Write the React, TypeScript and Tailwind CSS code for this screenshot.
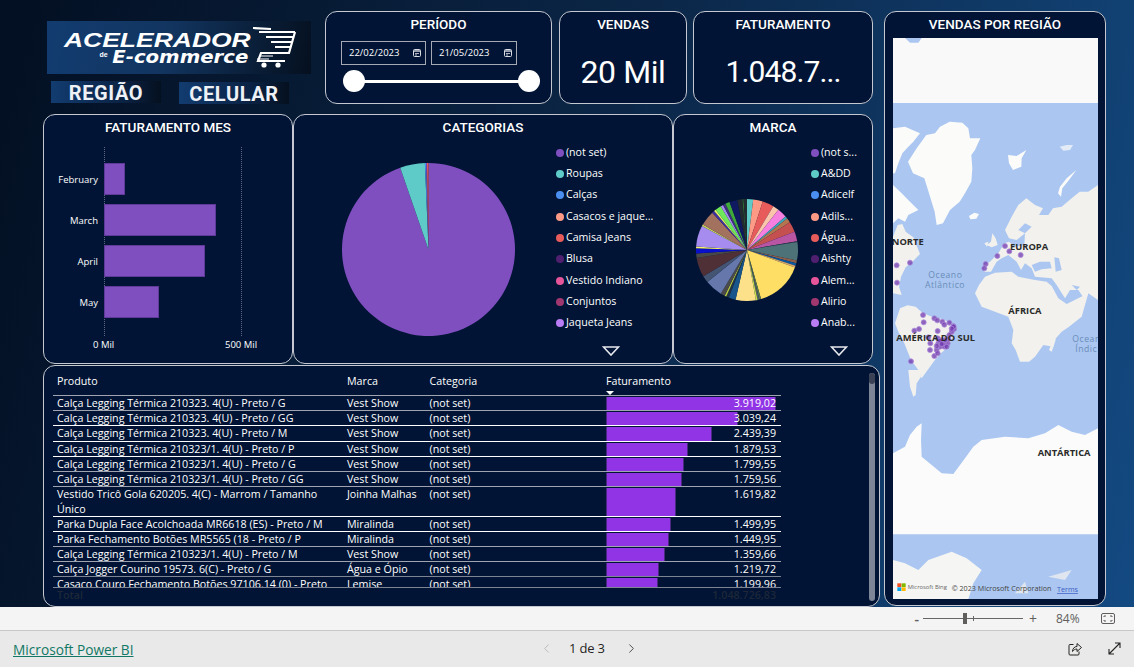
import { ChevronLeft, ChevronRight } from "lucide-react";

const BODY = "font-['Open_Sans','Noto_Sans',sans-serif]";
const TITLE = "font-['Roboto',sans-serif]";

const MONTHS = [
  { label: "February", width: 21 },
  { label: "March", width: 112 },
  { label: "April", width: 101 },
  { label: "May", width: 55 },
];

const CATEGORIAS = [
  { name: "(not set)", color: "#7f4fc0" },
  { name: "Roupas", color: "#5ecbc8" },
  { name: "Calças", color: "#4a8ff0" },
  { name: "Casacos e jaque...", color: "#fd9a85" },
  { name: "Camisa Jeans", color: "#e85b5b" },
  { name: "Blusa", color: "#4f1f70" },
  { name: "Vestido Indiano", color: "#e6559a" },
  { name: "Conjuntos", color: "#a0386f" },
  { name: "Jaqueta Jeans", color: "#b87cf5" },
];

const MARCAS = ["(not s...", "A&DD", "Adicelf", "Adils...", "Água...", "Aishty", "Alem...", "Alirio", "Anab..."];

// end angle of every slice, going clockwise from 12 o'clock
const CATEGORIA_SLICES: [number, string][] = [
  [340.9, "#7f4fc0"],
  [357.6, "#5ecbc8"],
  [358.4, "#4a8ff0"],
  [359, "#7f4fc0"],
  [360, "#e85b5b"],
];

const MARCA_SLICES: [number, string][] = [
  [7, "#5ecbc8"], [18, "#fd9a85"], [31, "#e85b5b"], [38, "#fbc5ac"], [49, "#f67fe0"], [52, "#3fa5b5"],
  [57, "#b5764f"], [69, "#c55050"], [80, "#b956a4"], [81, "#333c44"], [102, "#4d7378"], [105, "#8d5f4a"],
  [108, "#0d5aa0"], [110, "#d9a86f"], [164, "#fede65"], [166, "#5b7a4a"], [168, "#555f6a"], [170, "#c8e04a"],
  [193, "#fde08a"], [201, "#17558a"], [204, "#223344"], [206, "#b7c93f"], [211, "#4a4a4a"], [231, "#6678ab"],
  [239, "#445473"], [261, "#4f3037"], [266, "#484848"], [272, "#0a10c9"], [274, "#f7f26a"], [298, "#a58cee"],
  [300, "#c9d65a"], [317, "#a3725f"], [320, "#3f2f9f"], [322, "#e8f56a"], [329, "#6ee85a"], [332, "#a58cee"],
  [335, "#3f2f7f"], [340, "#3fa83a"], [349, "#0f1a60"], [355, "#222b2f"], [356, "#3a8a30"], [360, "#222b2f"],
];

const ROWS = [
  { produto: "Calça Legging Térmica 210323. 4(U) - Preto / G", marca: "Vest Show", valor: 3919.02, text: "3.919,02", h: "h-[15px] border-[#9ea4b0]" },
  { produto: "Calça Legging Térmica 210323. 4(U) - Preto / GG", marca: "Vest Show", valor: 3039.24, text: "3.039,24", h: "h-[15px] border-white" },
  { produto: "Calça Legging Térmica 210323. 4(U) - Preto / M", marca: "Vest Show", valor: 2439.39, text: "2.439,39", h: "h-[16px] border-white" },
  { produto: "Calça Legging Térmica 210323/1. 4(U) - Preto / P", marca: "Vest Show", valor: 1879.53, text: "1.879,53", h: "h-[15px] border-white" },
  { produto: "Calça Legging Térmica 210323/1. 4(U) - Preto / G", marca: "Vest Show", valor: 1799.55, text: "1.799,55", h: "h-[15px] border-[#9ea4b0]" },
  { produto: "Calça Legging Térmica 210323/1. 4(U) - Preto / GG", marca: "Vest Show", valor: 1759.56, text: "1.759,56", h: "h-[15px] border-[#9ea4b0]" },
  { produto: "Vestido Tricô Gola 620205. 4(C) - Marrom / Tamanho Único", marca: "Joinha Malhas", valor: 1619.82, text: "1.619,82", h: "h-[30px] border-white" },
  { produto: "Parka Dupla Face Acolchoada MR6618 (ES) - Preto / M", marca: "Miralinda", valor: 1499.95, text: "1.499,95", h: "h-[15px] border-white" },
  { produto: "Parka Fechamento Botões MR5565 (18 - Preto / P", marca: "Miralinda", valor: 1449.95, text: "1.449,95", h: "h-[15px] border-[#9ea4b0]" },
  { produto: "Calça Legging Térmica 210323/1. 4(U) - Preto / M", marca: "Vest Show", valor: 1359.66, text: "1.359,66", h: "h-[15px] border-[#9ea4b0]" },
  { produto: "Calça Jogger Courino 19573. 6(C) - Preto / G", marca: "Água e Ópio", valor: 1219.72, text: "1.219,72", h: "h-[15px] border-[#7d8494]" },
  { produto: "Casaco Couro Fechamento Botões 97106.14 (0) - Preto / M", marca: "Lemise", valor: 1199.96, text: "1.199,96", h: "h-[15px] border-[#7d8494]" },
];

const DOTS = [
  [35, 406], [75, 398], [36, 458], [302, 402], [298, 415], [337, 378], [360, 348], [373, 364], [407, 375],
  [114, 555], [116, 577], [148, 565], [157, 571], [172, 575], [178, 584], [193, 578], [205, 588], [207, 597],
  [200, 606], [193, 615], [158, 603], [88, 602], [102, 597], [130, 622], [158, 625], [136, 640], [135, 660],
  [155, 660], [148, 678], [158, 670], [165, 650], [178, 650], [188, 640], [170, 630], [185, 650], [78, 694],
  [160, 640], [175, 640], [190, 628], [165, 632], [180, 630], [170, 642], [155, 648], [206, 590], [200, 596],
];

function polar(cx: number, cy: number, r: number, deg: number) {
  const a = ((deg - 90) * Math.PI) / 180;
  return `${cx + r * Math.cos(a)} ${cy + r * Math.sin(a)}`;
}

function Pie({ slices, r }: { slices: [number, string][]; r: number }) {
  const c = r + 1;
  let start = 0;
  return (
    <svg width={c * 2} height={c * 2} viewBox={`0 0 ${c * 2} ${c * 2}`}>
      {slices.map(([end, color]) => {
        const large = end - start > 180 ? 1 : 0;
        const d = `M${c} ${c} L${polar(c, c, r, start)} A${r} ${r} 0 ${large} 1 ${polar(c, c, r, end)} Z`;
        start = end;
        return <path key={end} d={d} fill={color} />;
      })}
    </svg>
  );
}

function Panel({ title, className, children }: { title?: string; className: string; children: React.ReactNode }) {
  return (
    <div className={`relative rounded-[12px] border border-[#c5c8d0] bg-[#011435] text-white ${className}`}>
      {title && <div className={`${TITLE} pt-[3px] text-center text-[13.5px] font-medium leading-[18px]`}>{title}</div>}
      {children}
    </div>
  );
}

function Legend({ items, className }: { items: { name: string; color: string }[]; className: string }) {
  return (
    <div className={`absolute top-[27px] flex flex-col ${className}`}>
      {items.map((item) => (
        <div key={item.name} className={`${BODY} flex h-[21.35px] items-center gap-[2px] whitespace-nowrap text-[10.6px]`}>
          <span className="h-[8px] w-[8px] rounded-full" style={{ backgroundColor: item.color }} />
          {item.name}
        </div>
      ))}
    </div>
  );
}

function MoreArrow({ className }: { className: string }) {
  return (
    <svg className={`absolute top-[231px] ${className}`} width="18" height="10" viewBox="0 0 18 10">
      <path d="M1.5 1 H16.5 L9 9 Z" fill="#011435" stroke="#e8e8ee" strokeWidth="1.6" />
    </svg>
  );
}

function DateBox({ value }: { value: string }) {
  return (
    <div className={`${BODY} flex h-[24px] items-center justify-between border border-[#a5a9b3] pl-[7px] pr-[4px] text-[9.5px] text-white`}>
      {value}
      <svg width="8" height="8" viewBox="0 0 8 8" fill="none" stroke="#d9dbe2">
        <rect x="0.5" y="0.5" width="7" height="7" rx="1" />
        <path d="M1 2 H7" strokeWidth="1.4" />
        <path d="M2 4.5 H6 M2 6 H4" strokeWidth="0.8" />
      </svg>
    </div>
  );
}

function Logo() {
  return (
    <div className="flex h-[53px] w-[264px] items-center overflow-hidden bg-[linear-gradient(100deg,#123c70_0%,#123560_45%,#05101f_100%)]">
      <div className="ml-[17px] flex w-[184px] flex-col">
        <span className="origin-left scale-x-[1.26] font-['Liberation_Sans',sans-serif] text-[21px] font-bold italic leading-[19px] text-white">
          ACELERADOR
        </span>
        <div className="flex items-center justify-end">
          <span className="mr-[23px] mt-[-4px] font-['Liberation_Sans',sans-serif] text-[7px] font-bold text-white">de</span>
          <span className="origin-right scale-x-[1.16] whitespace-nowrap font-['DejaVu_Sans',sans-serif] text-[17px] font-bold italic leading-[17px] text-white">
            E-commerce
          </span>
        </div>
      </div>
      <svg className="ml-[3px]" width="46" height="42" viewBox="0 0 46 42" fill="none" stroke="#fff">
        <path d="M2 1 L20 2 M8 5 H44 M15 10 H43 M20 15 H41 M24 20 H40" strokeWidth="2.2" />
        <path d="M44 5 L38 26 H10 L7 34 H34" strokeWidth="2.2" />
        <path d="M8 29 H22 M6 32 H18" strokeWidth="1" />
        <circle cx="13" cy="38" r="2.6" fill="#fff" stroke="none" />
        <circle cx="27" cy="38" r="2.6" fill="#fff" stroke="none" />
      </svg>
    </div>
  );
}

function NavButton({ label, className }: { label: string; className: string }) {
  return (
    <div
      className={`flex h-[22px] w-[110px] items-center justify-center bg-[linear-gradient(90deg,#123c70,#0a2040_70%,#05101f)] pt-[2px] font-['Roboto',sans-serif] text-[20px] font-bold tracking-[0.6px] text-[#eef1f5] ${className}`}
    >
      {label}
    </div>
  );
}

function WorldMap() {
  return (
    <svg className="mx-auto block" width="205" height="561" viewBox="24 -276 615 1683">
      <rect x="24" y="-276" width="615" height="1683" fill="#abc7f1" />
      <path d="M24 -276 H639 V-81 H24 Z" fill="#f9f9f9" />
      <path d="M60 -276 H110 L100 -262 L75 -262 Z" fill="#abc7f1" />
      {/* arctic */}
      <g fill="#fbfbfa">
        <path d="M69 95 L95 55 L124 15 L150 10 L165 -10 L194 -25 L232 -22 L250 -5 L255 25 L286 25 L270 60 L259 75 L262 115 L259 155 L240 190 L224 215 L195 240 L174 280 L155 285 L149 245 L129 180 L118 145 L84 130 Z" />
        <path d="M24 -5 L60 -10 L105 10 L85 35 L70 50 L52 70 L40 100 L30 130 L24 130 Z" />
        <path d="M24 165 L50 190 L75 215 L100 240 L70 255 L60 275 L40 265 L24 280 Z" />
        <path d="M369 75 L395 78 L424 60 L410 85 L409 110 L384 120 L372 100 Z" />
        <path d="M524 50 L545 45 L564 45 L555 60 L535 62 Z" opacity="0.7" />
        <path d="M574 120 L545 145 L525 170 L519 190 L528 200 L532 175 L552 150 Z" />
        <path d="M252 258 L268 248 L282 252 L274 266 L256 268 Z" />
      </g>
      {/* continents */}
      <g fill="#f2f1ed">
        <path d="M24 320 L38 285 L52 282 L62 305 L85 322 L105 372 L85 392 L62 412 L48 440 L42 470 L50 495 L24 490 Z" />
        <path d="M45 535 L68 526 L92 530 L112 548 L140 560 L175 568 L212 590 L205 615 L190 650 L165 672 L148 692 L128 720 L110 745 L100 720 L78 690 L58 640 L40 605 L30 580 Z" />
        <path d="M70 720 L105 720 L108 740 L95 760 L92 795 L85 800 L75 770 Z" />
        <path d="M270 490 L282 465 L300 440 L330 428 L380 425 L400 440 L450 450 L485 455 L500 468 L520 505 L545 522 L610 490 L590 560 L552 590 L530 605 L510 628 L505 650 L475 645 L450 680 L432 695 L405 695 L392 660 L380 640 L385 600 L370 560 L330 545 L290 530 Z" />
        <path d="M296 405 L315 395 L340 370 L358 340 L372 335 L390 350 L418 345 L420 310 L395 330 L372 325 L360 300 L380 260 L400 225 L424 205 L450 225 L474 235 L462 255 L490 255 L504 235 L530 230 L560 205 L584 185 L610 185 L639 165 V510 L610 490 L600 510 L580 480 L555 480 L540 505 L515 465 L500 445 L450 440 L440 415 L420 400 L408 420 L395 395 L370 375 L350 385 L335 395 L318 425 L298 425 Z" />
        <path d="M305 345 L318 335 L322 310 L332 325 L338 345 L320 352 Z M298 340 L310 335 L306 350 Z" />
        <path d="M492 660 L510 615 L512 630 L500 665 Z" />
      </g>
      {/* inland seas */}
      <g fill="#abc7f1">
        <path d="M440 405 L465 395 L495 395 L500 415 L470 418 L450 425 Z" />
        <path d="M508 382 L522 385 L530 420 L512 425 Z" />
        <path d="M560 465 L585 470 L575 480 Z" />
        <path d="M400 300 L420 280 L440 290 L420 310 Z" />
      </g>
      <path
        d="M24 970 L60 950 L75 915 L95 890 L110 880 L108 930 L110 980 L140 1005 L170 1030 L205 1032 L225 1005 L240 985 L265 950 L290 930 L360 920 L430 925 L480 910 L520 885 L560 905 L600 915 L639 895 V1213 H24 Z"
        fill="#fbfbfb"
      />
      <path d="M24 1290 L60 1300 L100 1320 L130 1290 L200 1265 L245 1285 L290 1320 L265 1360 L250 1407 H24 Z" fill="#f5f5f3" />
      <path d="M390 1390 L420 1355 L430 1390 Z M490 1340 L560 1320 L540 1350 Z" fill="#dfe6f0" />
      <g fill="#6d33ad" fillOpacity="0.75" stroke="#a98ad8" strokeOpacity="0.95" strokeWidth="2.5">
        {DOTS.map(([x, y]) => (
          <circle key={`${x}-${y}`} cx={x} cy={y} r="7.5" />
        ))}
      </g>
      <g className="font-['Open_Sans',sans-serif]" fontWeight="700" fontSize="28" fill="#2a2a2a">
        <text x="116" y="346" textAnchor="end">NORTE</text>
        <text x="375" y="360">EUROPA</text>
        <text x="370" y="552">ÁFRICA</text>
        <text x="270" y="633" textAnchor="end">AMÉRICA DO SUL</text>
        <text x="458" y="977">ANTÁRTICA</text>
      </g>
      <g className="font-['Open_Sans',sans-serif]" fontSize="26" fill="#6a8cb8" letterSpacing="1.5">
        <text x="181" y="444" textAnchor="middle">Oceano</text>
        <text x="180" y="474" textAnchor="middle">Atlântico</text>
        <text x="562" y="637">Ocean</text>
        <text x="571" y="666">Índic</text>
      </g>
      <rect x="37" y="1360" width="12" height="11" fill="#f25022" />
      <rect x="50" y="1360" width="12" height="11" fill="#7fba00" />
      <rect x="37" y="1372" width="12" height="11" fill="#00a4ef" />
      <rect x="50" y="1372" width="12" height="11" fill="#ffb900" />
      <g className="font-['Open_Sans',sans-serif]" fill="#555">
        <text x="68" y="1376" fontSize="17.5" fill="#666">Microsoft Bing</text>
        <text x="200" y="1384" fontSize="21.5" fill="#444">© 2023 Microsoft Corporation</text>
        <text x="516" y="1386" fontSize="21.5" fill="#3b5cc4" textDecoration="underline">Terms</text>
      </g>
    </svg>
  );
}

export default function App() {
  return (
    <div className="flex h-[667px] w-[1134px] flex-col overflow-hidden">
      <div className="flex h-[607px] bg-[linear-gradient(105deg,#030f22_0%,#0b2647_50%,#134a82_100%)] pl-[43px] pt-[11px]">
        <div className="flex w-[837px] flex-col">
          {/* top row */}
          <div className="flex h-[93px]">
            <div className="flex w-[282px] flex-col pl-[4px] pt-[10px]">
              <Logo />
              <div className="mt-[7px] flex">
                <NavButton label="REGIÃO" className="ml-[4px]" />
                <NavButton label="CELULAR" className="ml-[18px] mt-[1px]" />
              </div>
            </div>
            <Panel title="PERÍODO" className="h-[93px] w-[227px]">
              <div className="ml-[15px] mt-[8px] grid w-[176px] grid-cols-[85px_86px] gap-[5px]">
                <DateBox value="22/02/2023" />
                <DateBox value="21/05/2023" />
              </div>
              <div className="relative ml-[17px] mt-[5px] flex h-[22px] w-[197px] items-center justify-between">
                <div className="absolute left-[11px] right-[11px] top-[9.5px] h-[3px] bg-white" />
                <div className="relative h-[22px] w-[22px] rounded-full bg-white" />
                <div className="relative h-[22px] w-[22px] rounded-full bg-white" />
              </div>
            </Panel>
            <Panel title="VENDAS" className="ml-[7px] h-[93px] w-[128px]">
              <div className={`${TITLE} mt-[19px] text-center text-[32px] leading-[40px] tracking-[-0.4px]`}>20 Mil</div>
            </Panel>
            <Panel title="FATURAMENTO" className="ml-[6px] h-[93px] w-[180px]">
              <div className={`${TITLE} mt-[19px] text-center text-[30px] leading-[40px] tracking-[-0.9px]`}>1.048.7...</div>
            </Panel>
          </div>

          {/* charts row */}
          <div className="mt-[10px] flex h-[250px]">
            <Panel title="FATURAMENTO MES" className="h-[250px] w-[250px]">
              <div className="absolute left-[60px] top-[32px] h-[189px] w-[138px] border-x border-dotted border-[#5d6880]" />
              <div className="absolute left-[60px] top-[48px] flex flex-col gap-[9px]">
                {MONTHS.map((m) => (
                  <div key={m.label} className="relative h-[32px] border border-[#5f3b99] bg-[#7f4fc0]" style={{ width: m.width }}>
                    <span className={`${BODY} absolute right-[calc(100%+7px)] top-[10px] text-[9.5px] leading-[12px]`}>{m.label}</span>
                  </div>
                ))}
              </div>
              <div className={`${BODY} absolute left-[49px] top-[223px] flex w-[180px] text-[9.5px] leading-[14px]`}>
                <span className="w-[132px]">0 Mil</span>
                <span>500 Mil</span>
              </div>
            </Panel>
            <Panel title="CATEGORIAS" className="h-[250px] w-[380px]">
              <div className="absolute left-[47px] top-[47px]">
                <Pie slices={CATEGORIA_SLICES} r={86.5} />
              </div>
              <Legend items={CATEGORIAS} className="left-[262px]" />
              <MoreArrow className="left-[308px]" />
            </Panel>
            <Panel title="MARCA" className="h-[250px] w-[200px]">
              <div className="absolute left-[21px] top-[83px]">
                <Pie slices={MARCA_SLICES} r={51} />
              </div>
              <Legend
                items={MARCAS.map((name, i) => ({ name, color: CATEGORIAS[i].color }))}
                className="left-[137px]"
              />
              <MoreArrow className="left-[156px]" />
            </Panel>
          </div>

          {/* table */}
          <Panel className="mt-px h-[243px] w-[837px]">
            <div className={`${BODY} ml-[9px] w-[728px] text-[10.7px] leading-[15px]`}>
              <div className="relative flex h-[30px] items-center border-b border-[#9ea4b0] pt-[1px]">
                <div className="w-[294px] pl-[4px]">Produto</div>
                <div className="w-[82.5px]">Marca</div>
                <div className="w-[176.5px]">Categoria</div>
                <div>Faturamento</div>
                <div className="absolute bottom-0 left-[553px] h-0 w-0 border-x-[4px] border-t-[4px] border-x-transparent border-t-white" />
              </div>
              <div className="h-[192px] overflow-hidden border-b border-[#7d8494]">
                {ROWS.map((r) => (
                  <div key={r.produto} className={`flex overflow-hidden border-b ${r.h}`}>
                    <div className="w-[294px] pl-[4px] pr-[14px]">{r.produto}</div>
                    <div className="w-[82.5px]">{r.marca}</div>
                    <div className="w-[176.5px]">(not set)</div>
                    <div className="relative w-[175px] text-right">
                      <div
                        className="absolute bottom-0 left-0 top-[1px] border-x border-x-[#4a2a80] bg-[#9034e6]"
                        style={{ width: (r.valor / 3919.02) * 170 }}
                      />
                      <span className="relative pr-[5px]">{r.text}</span>
                    </div>
                  </div>
                ))}
              </div>
              <div className="flex justify-between pl-[4px] pr-[5px] font-semibold text-[#1d2738]">
                <span>Total</span>
                <span>1.048.726,83</span>
              </div>
            </div>
            <div className="absolute right-[4px] top-[7px] h-[228px] w-[6px] rounded-full bg-[#7d8597]">
              <div className="h-[11px] rounded-full bg-[#3b4256]" />
            </div>
          </Panel>
        </div>

        {/* map */}
        <Panel title="VENDAS POR REGIÃO" className="ml-[4px] h-[595px] w-[222px]">
          <div className="mt-[5px]">
            <WorldMap />
          </div>
        </Panel>
      </div>

      {/* zoom bar */}
      <div className={`${BODY} flex h-[24px] items-center justify-end border-b border-[#c9c9c9] bg-[#f4f4f4] text-[#605e5c]`}>
        <span className="text-[14px] font-semibold leading-none">-</span>
        <div className="relative ml-[4px] h-px w-[100px] bg-[#666]">
          <div className="absolute left-[40px] top-[-5px] h-[11px] w-[4px] bg-[#605e5c]" />
          <div className="absolute left-[50px] top-[-2px] h-[5px] w-px bg-[#666]" />
        </div>
        <span className="ml-[6px] text-[14px] leading-none">+</span>
        <span className="ml-[19px] w-[26px] text-[12px]">84%</span>
        <svg className="ml-[19px] mr-[19px]" width="14" height="11" viewBox="0 0 14 11" fill="none" stroke="#605e5c">
          <rect x="0.5" y="0.5" width="13" height="10" rx="1.5" />
          <path d="M3 4 V3 H5 M9 3 H11 V4 M11 7 V8 H9 M5 8 H3 V7" />
        </svg>
      </div>

      {/* footer */}
      <div className="flex h-[36px] items-center bg-[#e9e9e9] pt-[3px]">
        <a className={`${BODY} ml-[13px] w-[500px] whitespace-nowrap text-[13.7px] text-[#117865] underline`}>Microsoft Power BI</a>
        <ChevronLeft className="ml-[26px] mt-[-4px] h-[15px] w-[15px] text-[#b8b8b8]" strokeWidth={1.5} />
        <span className={`${BODY} ml-[15px] mt-[-4px] w-[38px] whitespace-nowrap text-[13px] font-medium tracking-[-0.2px] text-[#252423]`}>1 de 3</span>
        <ChevronRight className="ml-[17px] mt-[-4px] h-[15px] w-[15px] text-[#444]" strokeWidth={1.5} />
        <svg className="ml-[429px] mt-[-4px]" width="14" height="14" viewBox="0 0 14 14" fill="none" stroke="#252423" strokeWidth="1">
          <path d="M5.5 2.5 H2 a1 1 0 0 0 -1 1 V12 a1 1 0 0 0 1 1 H10 a1 1 0 0 0 1 -1 V9.5" />
          <path d="M4.5 9.5 C4.5 6.5 6.5 4.5 9 4.5 V1.5 L13.5 5.5 L9 9.5 V7 C7 7 5.5 8 4.5 9.5 Z" />
        </svg>
        <svg className="ml-[26px] mt-[-4px]" width="13" height="13" viewBox="0 0 13 13" fill="none" stroke="#252423" strokeWidth="1.1">
          <path d="M1 12 L12 1 M7 1 H12 V6 M1 7 V12 H6" />
        </svg>
      </div>
    </div>
  );
}
